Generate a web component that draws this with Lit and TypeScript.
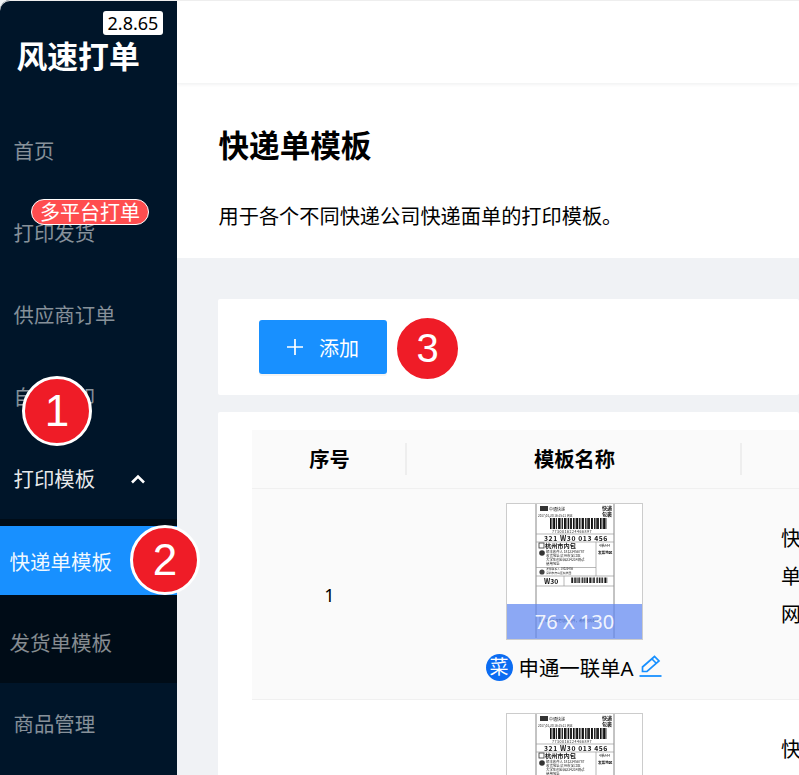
import { LitElement, html, css, svg } from "lit";
import { customElement } from "lit/decorators.js";

const bars1 = [0,1.5,3,4,6,8,9,10.5,12,14,15,16.5,18,20,21,23,24.5,26,27,29,30.5,32,33,35,36.5,38,39,41,42,44,45.5,47,48,50,51.5,53,54,55.5];
const bars2 = [0,1,3,4,5.5,7,8,10,11,12.5,14,15,17,18,19.5,21,22,24,25,26.5,28,29,31,32,33.5];

function labelArt() {
  return svg`<svg class="art" viewBox="0 0 135 135" width="135" height="135" aria-hidden="true">
    <rect x="0" y="0" width="135" height="135" fill="#fff"/>
    <path d="M29 0V134M107 0V134" stroke="#888" stroke-width="1" fill="none"/>
    <g stroke="#999" fill="none" stroke-width=".7">
      <path d="M29 30H107M29 38H107M89 38V72M29 63.500H89M29 72H107M29 82H107M57 72V82"/>
    </g>
    <rect x="33" y="2" width="8" height="5" fill="#333"/>
    <text x="42" y="7" class="t" font-size="4">中通快递</text>
    <text x="95" y="6" class="b" font-size="5">快递</text>
    <text x="95" y="12" class="b" font-size="5">包裹</text>
    <text x="31" y="13" class="t" font-size="3">2017/01/20 16:15:21 周五</text>
    ${bars1.map((x, i) => svg`<rect x="${43 + x}" y="14" width="${i % 3 === 0 ? 1.2 : .9}" height="11" fill="#111"/>`)}
    <text x="45" y="29" class="t" font-size="3.600" letter-spacing=".5">7730016224466897</text>
    <text x="37" y="36.500" class="b" font-size="6.800" letter-spacing=".6">321 W30 013 456</text>
    <rect x="32" y="39" width="5" height="5" fill="none" stroke="#333" stroke-width=".8"/>
    <text x="38" y="44" class="b" font-size="6.200">杭州市内包</text>
    <circle cx="35" cy="49" r="2.800" fill="#333"/>
    <text x="39" y="48.500" class="t" font-size="3.400">顺丰收件人 18123456787</text>
    <text x="39" y="53" class="t" font-size="3.400">收货地址 杭州市滨江区</text>
    <text x="39" y="57" class="t" font-size="3.400">大学生创业园234234测试</text>
    <text x="39" y="61" class="t" font-size="3.400">使用地址</text>
    <text x="92" y="43" class="t" font-size="3.400">4单A44</text>
    <text x="91" y="50" class="b" font-size="3.600">发票地区</text>
    <circle cx="35" cy="68" r="2.600" fill="#444"/>
    <text x="39" y="66" class="t" font-size="2.800">发件联系人 18023456</text>
    <text x="39" y="70" class="t" font-size="2.800">深圳市南山区科技园</text>
    <text x="37" y="79.500" class="b" font-size="6.800">W30</text>
    ${bars2.map((x, i) => svg`<rect x="${64 + x * 1.06}" y="73.500" width="${i % 2 ? 1.1 : .7}" height="5.500" fill="#111"/>`)}
    <rect x="33" y="112" width="3" height="6" fill="none" stroke="#444" stroke-width=".6"/>
    <text x="38" y="118" class="t" font-size="3.400">请妥善保管您的快件，谢谢您的配合</text>
  </svg>`;
}

@customElement("app-root")
export class AppRoot extends LitElement {
  static styles = css`
    :host {
      display: block;
      position: relative;
      width: 799px;
      height: 775px;
      overflow: hidden;
      background: #f0f2f5;
      font-family: "Noto Sans", "Noto Sans CJK SC", sans-serif;
      color: #000;
    }
    .shell { display: flex; height: 775px; }
    .side {
      flex: 0 0 177px;
      width: 177px;
      height: 775px;
      background: #001529;
      border-top-left-radius: 10px;
      overflow: hidden;
      box-shadow: inset 0 1px 0 #eee;
    }
    .brand { position: relative; height: 109px; }
    .logo {
      position: absolute;
      left: 16.500px;
      top: 34px;
      font-size: 30.800px;
      line-height: 44px;
      font-weight: 700;
      color: #fff;
      white-space: nowrap;
    }
    .ver {
      position: absolute;
      left: 103px;
      top: 11px;
      width: 60px;
      height: 24px;
      background: #fff;
      border-radius: 3px;
      font-size: 18px;
      line-height: 24px;
      text-align: center;
      color: #000;
    }
    .item {
      display: flex;
      align-items: center;
      justify-content: space-between;
      height: 82px;
      padding: 0 30px 0 13.500px;
      font-size: 20.400px;
      color: rgba(255, 255, 255, 0.53);
      white-space: nowrap;
      position: relative;
    }
    .item.open { color: rgba(255, 255, 255, 0.92); }
    .item.last { height: 80px; }
    .chev { display: block; margin-top: 1px; margin-right: 1px; }
    .tag {
      position: absolute;
      left: 31px;
      top: 8px;
      box-sizing: border-box;
      width: 118px;
      height: 26px;
      background: #ff4d4f;
      border: 1px solid #fff;
      border-radius: 13px;
      color: #fff;
      font-size: 20px;
      line-height: 25px;
      text-align: center;
    }
    .sub { background: #000c17; padding-top: 7px; height: 157px; }
    .sub-item {
      display: flex;
      align-items: center;
      height: 69px;
      padding-left: 9.500px;
      font-size: 20.500px;
      color: rgba(255, 255, 255, 0.53);
      white-space: nowrap;
    }
    .sub-item.on { background: #1890ff; color: rgba(255, 255, 255, 0.95); }
    .sub-item.two { height: 88px; padding-top: 6px; box-sizing: border-box; }
    .main { flex: 1 1 auto; min-width: 0; overflow: hidden; display: flex; flex-direction: column; }
    .top {
      flex: 0 0 83px;
      height: 83px;
      background: #fff;
      box-shadow: 0 1px 4px rgba(0, 21, 41, 0.08);
      border-top: 1px solid #eee;
      box-sizing: border-box;
      position: relative;
    }
    .head { flex: 0 0 175px; height: 175px; background: #fff; padding-left: 41.500px; box-sizing: border-box; }
    .head h1 { margin: 0; padding-top: 40px; font-size: 30.600px; line-height: 44px; font-weight: 700; }
    .head p { margin: 0; padding-top: 34px; font-size: 20.200px; line-height: 30px; white-space: nowrap; }
    .content { padding: 41px 0 0 41px; display: flex; flex-direction: column; gap: 17px; }
    .bar { background: #fff; height: 96px; display: flex; align-items: center; padding-left: 41px; border-radius: 2px; }
    .btn {
      display: flex;
      align-items: center;
      width: 128px;
      height: 54px;
      box-sizing: border-box;
      padding-left: 27px;
      gap: 15px;
      background: #1890ff;
      border-radius: 3px;
      color: #fff;
      font-size: 20px;
      box-shadow: 0 2px 0 rgba(0, 0, 0, 0.045);
    }
    .card { background: #fff; padding: 18px 0 0 34px; height: 400px; border-radius: 2px; }
    .row { display: grid; grid-template-columns: 155px 335px 300px; width: 790px; }
    .hd { height: 59px; background: #fafafa; border-bottom: 1px solid #f0f0f0; box-sizing: border-box; font-size: 20.300px; font-weight: 700; }
    .hd > div { display: flex; align-items: center; justify-content: center; position: relative; height: 56px; }
    .hd > div.sep::after {
      content: "";
      position: absolute;
      right: 0;
      top: 13px;
      width: 2px;
      height: 32px;
      background: #eee;
    }
    .r1 { background: #fafafa; height: 211px; border-bottom: 1px solid #f0f0f0; box-sizing: border-box; font-size: 20px; }
    .no { display: flex; align-items: center; justify-content: center; font-size: 18px; padding-top: 2px; }
    .tpl { display: flex; flex-direction: column; align-items: center; padding-top: 14px; }
    .r2 .tpl { padding-top: 13px; }
    .thumb {
      position: relative;
      width: 137px;
      height: 137px;
      box-sizing: border-box;
      border: 1px solid #ccc;
      background: #fff;
      flex: none;
      overflow: hidden;
    }
    .art { display: block; filter: blur(0.35px); }
    .art .t { font-family: "Noto Sans CJK SC", sans-serif; fill: #222; }
    .art .b { font-family: "Noto Sans CJK SC", sans-serif; font-weight: 700; fill: #111; }
    .size {
      position: absolute;
      left: 0;
      right: 0;
      bottom: 0;
      height: 35px;
      background: rgba(95, 135, 240, 0.72);
      color: rgba(255, 255, 255, 0.9);
      font-size: 20px;
      line-height: 35px;
      text-align: center;
    }
    .name { display: flex; align-items: center; height: 30px; margin-top: 12px; font-size: 20.400px; white-space: nowrap; }
    .vip {
      width: 27px;
      height: 27px;
      border-radius: 50%;
      background: #0b6cf2;
      color: #fff;
      font-size: 19px;
      line-height: 27px;
      text-align: center;
      margin-right: 6px;
      margin-left: -1px;
      flex: none;
    }
    .pen { margin-left: 6px; display: block; }
    .info { padding: 31px 0 0 39px; font-size: 20px; line-height: 38px; white-space: nowrap; }
    .r2 { background: #fff; height: 200px; }
    .mark {
      position: absolute;
      box-sizing: border-box;
      border-radius: 50%;
      background: #ef1c27;
      border: 3px solid #fff;
      color: #fff;
      font-family: "Liberation Sans", Arial, sans-serif;
      display: flex;
      align-items: center;
      justify-content: center;
    }
    .m1 { left: 22px; top: 376px; width: 70px; height: 70px; font-size: 44px; }
    .m2 { left: 130px; top: 525px; width: 70px; height: 70px; font-size: 44px; }
    .m3 { left: 394px; top: 315px; width: 67px; height: 67px; font-size: 40px; }
  `;

  private thumb(withSize: boolean) {
    return html`<div class="thumb">${labelArt()}${withSize ? html`<div class="size">76 X 130</div>` : ""}</div>`;
  }

  render() {
    return html`
      <div class="shell">
        <aside class="side">
          <div class="brand">
            <div class="logo">风速打单</div>
            <div class="ver">2.8.65</div>
          </div>
          <div class="item">首页</div>
          <div class="item">打印发货<span class="tag">多平台打单</span></div>
          <div class="item">供应商订单</div>
          <div class="item">自动打印</div>
          <div class="item open">打印模板
            <svg class="chev" width="16" height="12" viewBox="0 0 16 12" aria-hidden="true">
              <path d="M2 9.500 8 3.500 14 9.500" fill="none" stroke="#fff" stroke-width="2.600"/>
            </svg>
          </div>
          <div class="sub">
            <div class="sub-item on">快递单模板</div>
            <div class="sub-item two">发货单模板</div>
          </div>
          <div class="item last">商品管理</div>
        </aside>
        <main class="main">
          <div class="top"></div>
          <section class="head">
            <h1>快递单模板</h1>
            <p>用于各个不同快递公司快递面单的打印模板。</p>
          </section>
          <section class="content">
            <div class="bar">
              <div class="btn">
                <svg width="18" height="18" viewBox="0 0 18 18" aria-hidden="true">
                  <path d="M9 1V17M1 9H17" stroke="#fff" stroke-width="1.700" fill="none"/>
                </svg>
                <span>添加</span>
              </div>
            </div>
            <div class="card">
              <div class="row hd">
                <div class="sep">序号</div>
                <div class="sep">模板名称</div>
                <div></div>
              </div>
              <div class="row r1">
                <div class="no">1</div>
                <div class="tpl">
                  ${this.thumb(true)}
                  <div class="name">
                    <span class="vip">菜</span>申通一联单A
                    <svg class="pen" width="23" height="24" viewBox="0 0 23 24" aria-hidden="true">
                      <path d="M3.500 16.500V12L15.500 1.500 20 6 8 16.500Z M13 4 17.500 8.500" fill="none" stroke="#1890ff" stroke-width="1.700"/>
                      <path d="M0.500 21H22.500" stroke="#1890ff" stroke-width="1.800"/>
                    </svg>
                  </div>
                </div>
                <div class="info">快递公司<br />单号<br />网点</div>
              </div>
              <div class="row r2">
                <div class="no"></div>
                <div class="tpl">${this.thumb(false)}</div>
                <div class="info">快递公司</div>
              </div>
            </div>
          </section>
        </main>
      </div>
      <div class="mark m1">1</div>
      <div class="mark m2">2</div>
      <div class="mark m3">3</div>
    `;
  }
}
